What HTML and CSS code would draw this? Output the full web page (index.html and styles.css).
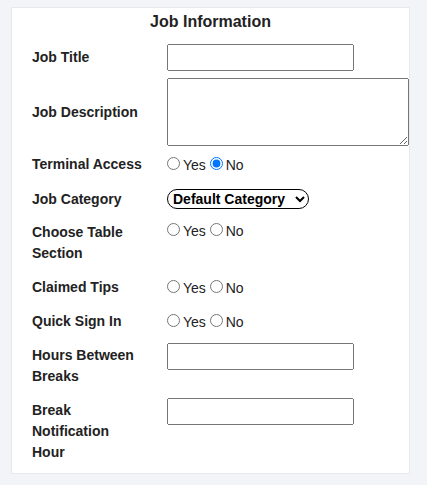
FILE: index.html
```html
<!DOCTYPE html>
<html>
<head>
<meta charset="utf-8">
<link rel="stylesheet" href="styles.css">
</head>
<body>
<div class="card">
  <div class="title">Job Information</div>
  <form class="form">
    <div class="row row-center row-first">
      <label class="label">Job Title</label>
      <div class="value"><input type="text" class="text-input"></div>
    </div>
    <div class="row row-center row-tight">
      <label class="label">Job Description</label>
      <div class="value"><textarea class="textarea"></textarea></div>
    </div>
    <div class="row row-after-area">
      <label class="label">Terminal Access</label>
      <div class="value radios"><input type="radio" name="ta" class="radio"><span>Yes</span> <input type="radio" name="ta" class="radio" checked><span>No</span></div>
    </div>
    <div class="row row-cat">
      <label class="label">Job Category</label>
      <div class="value"><select class="select"><option>Default Category</option></select></div>
    </div>
    <div class="row row-choose">
      <label class="label">Choose Table Section</label>
      <div class="value radios raised-radios"><input type="radio" name="cts" class="radio"><span>Yes</span> <input type="radio" name="cts" class="radio"><span>No</span></div>
    </div>
    <div class="row">
      <label class="label">Claimed Tips</label>
      <div class="value radios"><input type="radio" name="ct" class="radio"><span>Yes</span> <input type="radio" name="ct" class="radio"><span>No</span></div>
    </div>
    <div class="row">
      <label class="label">Quick Sign In</label>
      <div class="value radios"><input type="radio" name="qs" class="radio"><span>Yes</span> <input type="radio" name="qs" class="radio"><span>No</span></div>
    </div>
    <div class="row">
      <label class="label">Hours Between Breaks</label>
      <div class="value"><input type="text" class="text-input raised"></div>
    </div>
    <div class="row">
      <label class="label">Break Notification Hour</label>
      <div class="value"><input type="text" class="text-input raised"></div>
    </div>
  </form>
</div>
</body>
</html>
```
FILE: styles.css
```css
html, body {
  margin: 0;
  padding: 0;
  background: #f3f4f8;
}
body {
  padding: 7px 0 0 11px;
  font-family: "Liberation Sans", Arial, sans-serif;
  color: #222;
}
.card {
  width: 399px;
  box-sizing: border-box;
  background: #fff;
  border: 1px solid #e6e9ef;
  padding: 4px 0 10px 0;
}
.title {
  font-size: 16px;
  font-weight: bold;
  line-height: 19px;
  text-align: center;
}
.form {
  margin: 0;
  padding: 13px 0 0 20px;
}
.row {
  display: grid;
  grid-template-columns: 135px 1fr;
  align-items: start;
  margin-top: 13px;
}
.row-first { margin-top: 0; }
.row-tight { margin-top: 7px; }
.row-after-area { margin-top: 8px; }
.row-cat { margin-top: 14px; }
.row-choose { margin-top: 12px; }
.row-center { align-items: center; }
.label {
  font-size: 14px;
  font-weight: bold;
  line-height: 21px;
  width: 112px;
}
.value {
  font-size: 14px;
  line-height: 21px;
}
.radios {
  height: 21px;
  overflow: visible;
}
.raised-radios { margin-top: -2px; }
.text-input {
  display: block;
  width: 187px;
  height: 27px;
  box-sizing: border-box;
  margin: 0;
}
.raised { margin-top: -2px; }
.textarea {
  display: block;
  width: 242px;
  height: 68px;
  box-sizing: border-box;
  margin: 0;
}
.radio {
  margin: 3px 3px 0 0;
}
.select {
  display: block;
  margin: 0;
  width: 142px;
  height: 20px;
  box-sizing: border-box;
  font-family: "Liberation Sans", Arial, sans-serif;
  font-size: 14px;
  font-weight: bold;
  color: #000;
  background: #fff;
  border: 1px solid #000;
  border-radius: 10px;
  padding: 0 5px 0 1px;
}
```
